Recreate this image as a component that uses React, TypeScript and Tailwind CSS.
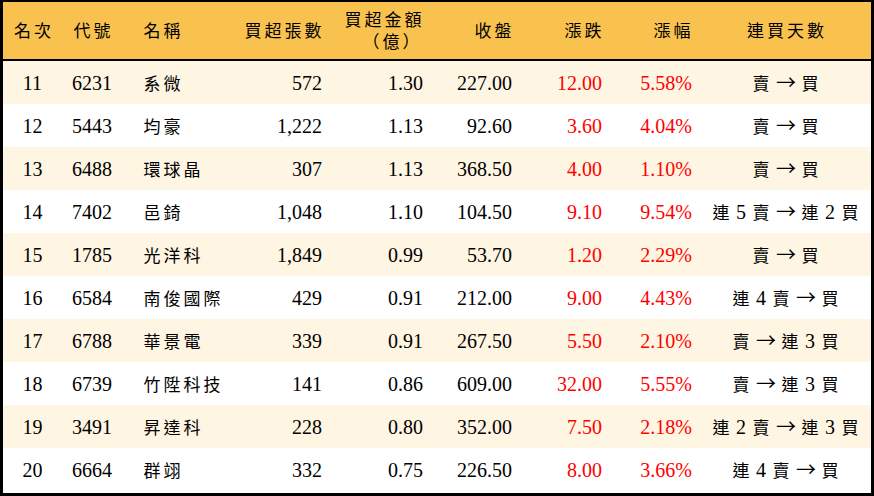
import React from "react";

const rows: string[][] = [
  ["11", "6231", "系微", "572", "1.30", "227.00", "12.00", "5.58%", "賣 → 買"],
  ["12", "5443", "均豪", "1,222", "1.13", "92.60", "3.60", "4.04%", "賣 → 買"],
  ["13", "6488", "環球晶", "307", "1.13", "368.50", "4.00", "1.10%", "賣 → 買"],
  ["14", "7402", "邑錡", "1,048", "1.10", "104.50", "9.10", "9.54%", "連 5 賣 → 連 2 買"],
  ["15", "1785", "光洋科", "1,849", "0.99", "53.70", "1.20", "2.29%", "賣 → 買"],
  ["16", "6584", "南俊國際", "429", "0.91", "212.00", "9.00", "4.43%", "連 4 賣 → 買"],
  ["17", "6788", "華景電", "339", "0.91", "267.50", "5.50", "2.10%", "賣 → 連 3 買"],
  ["18", "6739", "竹陞科技", "141", "0.86", "609.00", "32.00", "5.55%", "賣 → 連 3 買"],
  ["19", "3491", "昇達科", "228", "0.80", "352.00", "7.50", "2.18%", "連 2 賣 → 連 3 買"],
  ["20", "6664", "群翊", "332", "0.75", "226.50", "8.00", "3.66%", "連 4 賣 → 買"],
];

const isCjk = (c: string) => /[\u3000-\u303f\u3400-\u9fff\uff00-\uffef]/.test(c);

function Cjk({ text }: { text: string }) {
  return (
    <>
      {Array.from(text).map((c, i) =>
        isCjk(c) ? (
          <span key={i} className="inline-block w-[20px] text-center text-[17px]">
            {c}
          </span>
        ) : c === "→" ? (
          <span
            key={i}
            className="inline-block w-[19px] text-center text-[20px]"
            style={{ fontFamily: '"Noto Sans CJK TC", sans-serif' }}
          >
            {c}
          </span>
        ) : (
          <React.Fragment key={i}>{c}</React.Fragment>
        )
      )}
    </>
  );
}

const grid =
  "grid grid-cols-[59px_70px_80px_112px_100px_90px_90px_96px_1fr] items-center whitespace-nowrap";

export default function App() {
  return (
    <div
      className="w-[874px] h-[496px] border-black border-x-[3px] border-t-2 border-b-[3px] bg-white text-black text-[20px]"
      style={{ fontFamily: '"Liberation Serif", "DejaVu Serif", "Noto Sans CJK TC", serif' }}
    >
      <div className={`${grid} h-[59px] bg-[#f9c24f] border-b-2 border-black leading-[21px]`}>
        <div className="text-center"><Cjk text="名次" /></div>
        <div className="pl-[10px]"><Cjk text="代號" /></div>
        <div className="pl-[10px]"><Cjk text="名稱" /></div>
        <div className="text-right pr-[1px]"><Cjk text="買超張數" /></div>
        <div className="text-right pr-[1px] flex flex-col items-end">
          <span><Cjk text="買超金額" /></span>
          <span className="pr-[2px]"><Cjk text="（億）" /></span>
        </div>
        <div className="text-right pr-[1px]"><Cjk text="收盤" /></div>
        <div className="text-right pr-[1px]"><Cjk text="漲跌" /></div>
        <div className="text-right pr-[8px]"><Cjk text="漲幅" /></div>
        <div className="text-center"><Cjk text="連買天數" /></div>
      </div>
      {rows.map((r, i) => (
        <div
          key={r[0]}
          className={`${grid} h-[43px] ${i % 2 === 0 ? "bg-[#fef5e2]" : "bg-white"}`}
        >
          <div className="text-center">{r[0]}</div>
          <div className="pl-[10px]">{r[1]}</div>
          <div className="pl-[10px]"><Cjk text={r[2]} /></div>
          <div className="text-right pr-[2px]">{r[3]}</div>
          <div className="text-right pr-[1px]">{r[4]}</div>
          <div className="text-right pr-[2px]">{r[5]}</div>
          <div className="text-right pr-[2px] text-[#ff0000]">{r[6]}</div>
          <div className="text-right pr-[8px] text-[#ff0000]">{r[7]}</div>
          <div className="text-center whitespace-pre"><Cjk text={r[8]} /></div>
        </div>
      ))}
    </div>
  );
}
